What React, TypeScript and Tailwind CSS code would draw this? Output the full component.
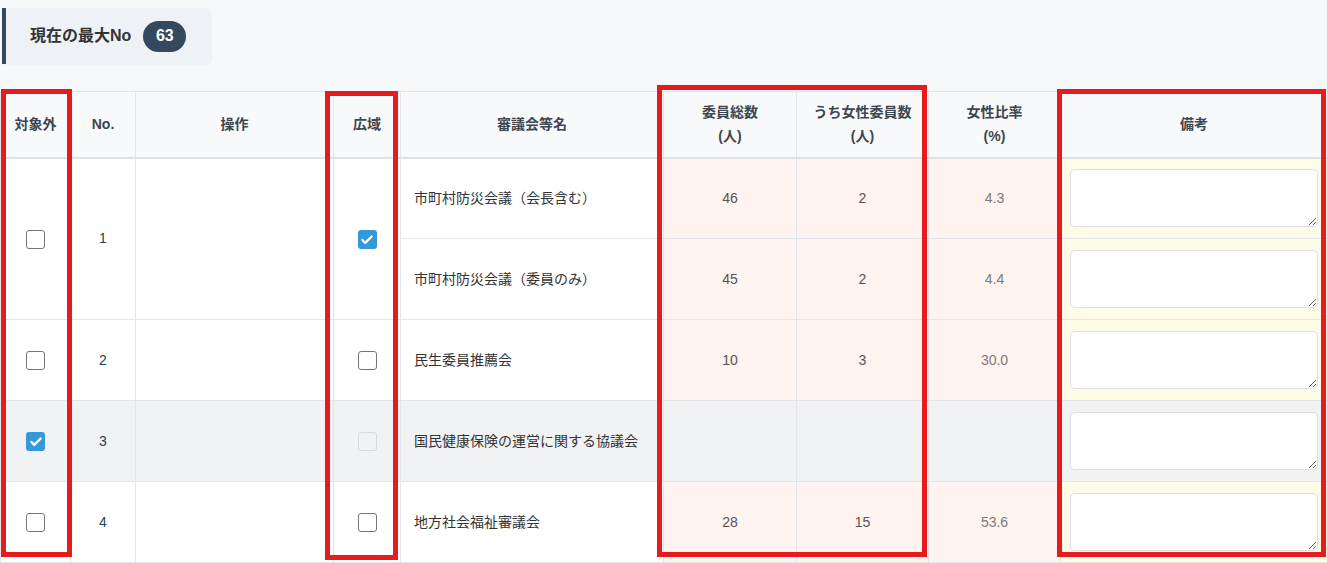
import React from 'react';
import { Check } from 'lucide-react';

type Row = {
  no: number;
  excluded: boolean;
  wide: boolean | null; // null = disabled
  councils: { name: string; total?: number; women?: number; ratio?: string }[];
};

const rows: Row[] = [
  {
    no: 1,
    excluded: false,
    wide: true,
    councils: [
      { name: '市町村防災会議（会長含む）', total: 46, women: 2, ratio: '4.3' },
      { name: '市町村防災会議（委員のみ）', total: 45, women: 2, ratio: '4.4' },
    ],
  },
  { no: 2, excluded: false, wide: false, councils: [{ name: '民生委員推薦会', total: 10, women: 3, ratio: '30.0' }] },
  { no: 3, excluded: true, wide: null, councils: [{ name: '国民健康保険の運営に関する協議会' }] },
  { no: 4, excluded: false, wide: false, councils: [{ name: '地方社会福祉審議会', total: 28, women: 15, ratio: '53.6' }] },
];

const Checkbox: React.FC<{ checked: boolean; disabled?: boolean }> = ({ checked, disabled }) => {
  if (checked) {
    return (
      <span className="inline-flex h-[19px] w-[19px] items-center justify-center rounded-[3px] bg-[#3498db] align-middle">
        <Check size={14} strokeWidth={4} className="text-white" />
      </span>
    );
  }
  return (
    <span
      className={
        disabled
          ? 'inline-block h-[19px] w-[19px] rounded-[3px] border border-[#d6d8dc] bg-[#f1f2f4] align-middle'
          : 'inline-block h-[19px] w-[19px] rounded-[3px] border border-[#767676] bg-white align-middle'
      }
    />
  );
};

const Note: React.FC = () => (
  <textarea className="block h-[58px] w-full resize-y rounded-[5px] border border-[#dcdfe6] bg-white" />
);

const th = 'border-x border-[#e3e5e8] px-2 text-center align-middle text-[14px] font-bold leading-[24px] text-[#3d4650]';
const td = 'border border-[#e3e5e8] align-middle text-[14px]';

export default function App() {
  return (
    <div
      className="relative min-h-[563px] bg-[#f7f8fa] pt-2"
      style={{ fontFamily: '"Liberation Sans", "Noto Sans CJK JP", sans-serif' }}
    >
      {/* current max number */}
      <div className="ml-[2px] flex h-14 w-[210px] items-center gap-3 rounded-r-md border-l-4 border-[#34495e] bg-[#eef1f5] pl-6 shadow-[0_1px_2px_rgba(0,0,0,0.03)]">
        <span className="text-[16px] font-bold text-[#333]">現在の最大No</span>
        <span className="flex h-[31px] w-[43px] items-center justify-center rounded-full bg-[#34495e] text-[16px] font-bold text-white">
          63
        </span>
      </div>

      <table className="mt-[27px] w-[1327px] table-fixed border-collapse bg-white">
        <colgroup>
          <col className="w-[70px]" />
          <col className="w-[65px]" />
          <col className="w-[198px]" />
          <col className="w-[67px]" />
          <col className="w-[263px]" />
          <col className="w-[133px]" />
          <col className="w-[132px]" />
          <col className="w-[132px]" />
          <col className="w-[267px]" />
        </colgroup>
        <thead>
          <tr className="h-[66px] border-t border-b-2 border-[#dee2e6] bg-[#f8f9fa]">
            <th className={th}>対象外</th>
            <th className={th}>No.</th>
            <th className={th}>操作</th>
            <th className={th}>広域</th>
            <th className={th}>審議会等名</th>
            <th className={th}>
              委員総数
              <br />
              (人)
            </th>
            <th className={th}>
              うち女性委員数
              <br />
              (人)
            </th>
            <th className={th}>
              女性比率
              <br />
              (%)
            </th>
            <th className={th}>備考</th>
          </tr>
        </thead>
        <tbody>
          {rows.map((r) => {
            const off = r.excluded;
            const span = r.councils.length;
            return r.councils.map((c, i) => (
              <tr key={`${r.no}-${i}`} className={off ? 'h-[81px] bg-[#f1f2f4]' : 'h-[81px]'}>
                {i === 0 && (
                  <>
                    <td rowSpan={span} className={`${td} text-center`}>
                      <Checkbox checked={r.excluded} />
                    </td>
                    <td rowSpan={span} className={`${td} text-center text-[#2c3e50]`}>
                      {r.no}
                    </td>
                    <td rowSpan={span} className={td} />
                    <td rowSpan={span} className={`${td} text-center`}>
                      <Checkbox checked={!!r.wide} disabled={r.wide === null} />
                    </td>
                  </>
                )}
                <td className={`${td} px-[13px] text-[#333]`}>{c.name}</td>
                <td className={`${td} text-center text-[#555] ${off ? '' : 'bg-[#fef3ee]'}`}>{c.total}</td>
                <td className={`${td} text-center text-[#555] ${off ? '' : 'bg-[#fef3ee]'}`}>{c.women}</td>
                <td className={`${td} text-center text-[#7a7a7a] ${off ? '' : 'bg-[#fef3ee]'}`}>{c.ratio}</td>
                <td className={`${td} px-[9px] ${off ? '' : 'bg-[#fffbe6]'}`}>
                  <Note />
                </td>
              </tr>
            ));
          })}
        </tbody>
      </table>

      {/* highlight frames */}
      <div className="pointer-events-none absolute left-[1px] top-[89px] h-[468px] w-[71px] border-[5px] border-[#e61b1e]" />
      <div className="pointer-events-none absolute left-[325px] top-[91px] h-[469px] w-[73px] border-[5px] border-[#e61b1e]" />
      <div className="pointer-events-none absolute left-[657px] top-[85px] h-[472px] w-[270px] border-[5px] border-[#e61b1e]" />
      <div className="pointer-events-none absolute left-[1057px] top-[89px] h-[468px] w-[269px] border-[5px] border-[#e61b1e]" />
    </div>
  );
}
